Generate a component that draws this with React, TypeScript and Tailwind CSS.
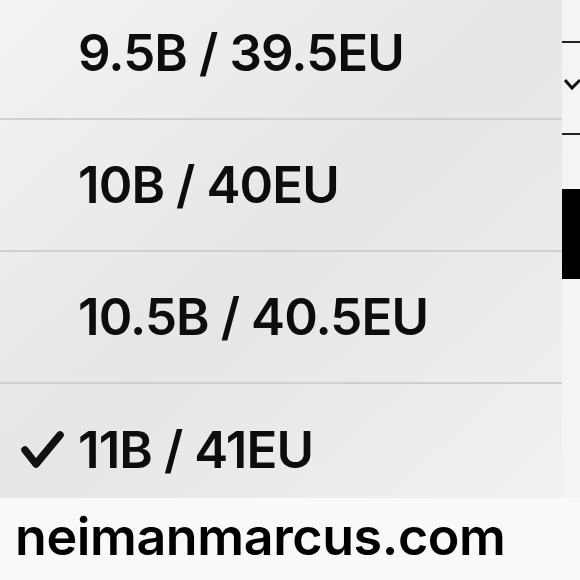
import React from "react";

const sizes = [
  { label: "9.5B / 39.5EU", checked: false },
  { label: "10B / 40EU", checked: false },
  { label: "10.5B / 40.5EU", checked: false },
  { label: "11B / 41EU", checked: true },
];

export default function App() {
  return (
    <div
      className="w-[580px] h-[580px] overflow-hidden flex flex-col bg-[#f9f9f9]"
      style={{ fontFamily: "Inter, 'Liberation Sans', sans-serif" }}
    >
      <div className="flex h-[498px]">
        <div className="w-[562px] h-full overflow-hidden bg-gradient-to-br from-[#f3f3f3] via-[#e6e6e6] to-[#f1f1f1]">
          <div className="-mt-[12px]">
            {sizes.map((s, i) => (
              <div
                key={s.label}
                className={`h-[132px] flex items-center ${i < sizes.length - 1 ? "border-b-2 border-[#cfcfcf]" : ""}`}
              >
                <div className="w-[78px] flex justify-start pl-[20px]">
                  {s.checked && (
                    <svg width="46" height="40" viewBox="0 0 46 40">
                      <path d="M5 20 L16 34 L40 5" fill="none" stroke="#111" strokeWidth="7.5" strokeLinecap="round" strokeLinejoin="round" />
                    </svg>
                  )}
                </div>
                <span className="text-[51px] font-semibold text-[#0d0d0d] tracking-[-0.9px]">{s.label}</span>
              </div>
            ))}
          </div>
        </div>
        <div className="flex-1 bg-[#f4f4f4] flex flex-col">
          <div className="h-[41px] shrink-0" />
          <div className="h-[2px] shrink-0 bg-[#222]" />
          <div className="h-[35px] shrink-0" />
          <div className="h-[14px] shrink-0 pl-[2px]">
            <svg width="16" height="14" viewBox="0 0 16 14">
              <path d="M1 2 L8 10 L16 2" fill="none" stroke="#111" strokeWidth="3" />
            </svg>
          </div>
          <div className="h-[41px] shrink-0" />
          <div className="h-[2px] shrink-0 bg-[#222]" />
          <div className="h-[54px] shrink-0" />
          <div className="h-[90px] shrink-0 bg-black" />
        </div>
      </div>
      <div className="flex-1 pl-[15px] pt-[3px]">
        <span className="text-[52px] font-semibold text-black leading-[72px] tracking-[-0.4px]">neimanmarcus.com</span>
      </div>
    </div>
  );
}
